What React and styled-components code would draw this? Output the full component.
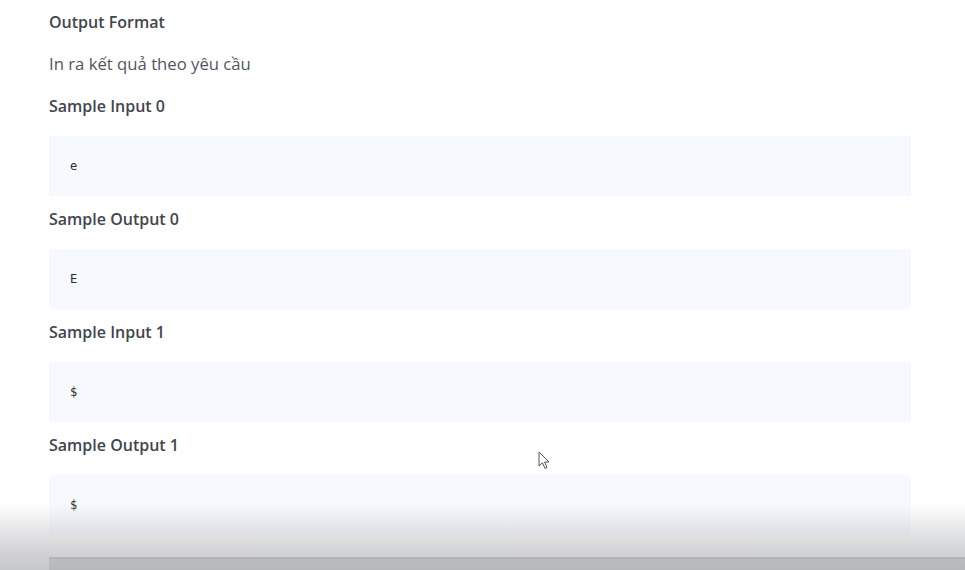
import React from "react";
import styled, { createGlobalStyle } from "styled-components";

const GlobalStyle = createGlobalStyle`
  html, body {
    margin: 0;
    padding: 0;
    background: #ffffff;
    overflow: hidden;
  }
  body {
    font-family: "Open Sans", "Noto Sans", sans-serif;
  }
`;

const Page = styled.div`
  position: relative;
  width: 965px;
  height: 570px;
  overflow: hidden;
  background: #ffffff;
`;

const Content = styled.div`
  padding: 10px 0 0 49px;
  width: 862px;
`;

const Heading = styled.h3`
  margin: 0 0 18px;
  font-size: 16px;
  line-height: 24px;
  font-weight: 600;
  color: #41464d;
`;

const Text = styled.p`
  margin: 0 0 18px;
  font-size: 16.7px;
  line-height: 24px;
  color: #4f565f;
`;

const CodeBox = styled.pre`
  margin: 0 0 11px;
  height: 60px;
  box-sizing: border-box;
  padding: 0 21px;
  display: flex;
  align-items: center;
  background: #f6f9fe;
  font-family: "DejaVu Sans Mono", "Liberation Mono", monospace;
  font-size: 12px;
  color: #2a2c2e;
`;

const Editor = styled.div`
  margin: 22px 0 0 49px;
  width: 940px;
  height: 40px;
  border-top: 2px solid #a9aaac;
  background: #c0c1c3;
`;

const Shade = styled.div`
  position: absolute;
  left: 0;
  right: 0;
  bottom: 0;
  height: 66px;
  pointer-events: none;
  background: linear-gradient(
    to bottom,
    rgba(190, 192, 196, 0) 0%,
    rgba(190, 192, 196, 0.3) 30%,
    rgba(185, 186, 190, 0.65) 75%,
    rgba(180, 181, 184, 0.75) 100%
  );
`;

const Cursor = styled.svg`
  position: absolute;
  left: 538px;
  top: 451px;
`;

const samples = [
  { title: "Sample Input 0", value: "e" },
  { title: "Sample Output 0", value: "E" },
  { title: "Sample Input 1", value: "$" },
  { title: "Sample Output 1", value: "$" },
];

export default function App() {
  return (
    <Page>
      <GlobalStyle />
      <Content>
        <Heading>Output Format</Heading>
        <Text>In ra kết quả theo yêu cầu</Text>
        {samples.map((s) => (
          <React.Fragment key={s.title}>
            <Heading>{s.title}</Heading>
            <CodeBox>{s.value}</CodeBox>
          </React.Fragment>
        ))}
      </Content>
      <Editor />
      <Shade />
      <Cursor width="14" height="20" viewBox="0 0 14 20">
        <path
          d="M1 1 L1 15 L4.5 11.8 L7 17.5 L9 16.6 L6.6 11 L11 11 Z"
          fill="#ffffff"
          stroke="#555"
          strokeWidth="1"
          strokeLinejoin="round"
        />
      </Cursor>
    </Page>
  );
}
